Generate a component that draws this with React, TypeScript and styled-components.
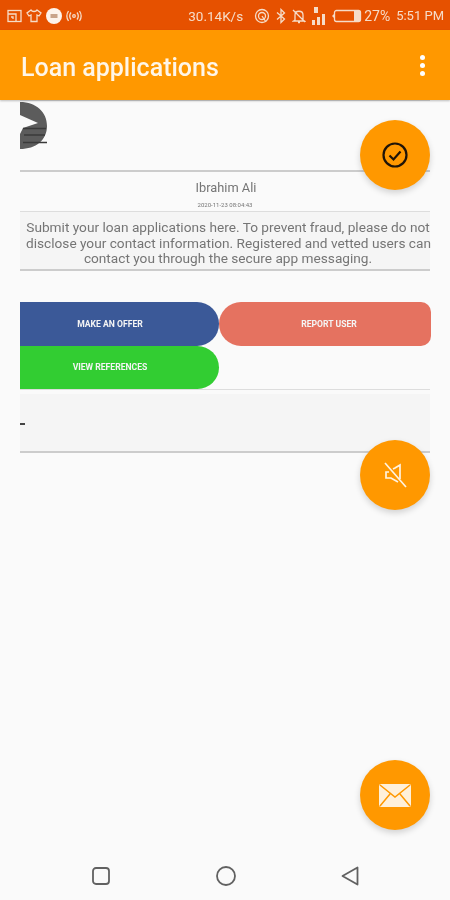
import React from 'react'
import styled, { createGlobalStyle } from 'styled-components'

const GlobalStyle = createGlobalStyle`
  html, body {
    margin: 0;
    padding: 0;
    background: #fafafa;
  }
  * {
    box-sizing: border-box;
  }
`

const palette = {
  ORANGE: '#ff9800',
  DARK_ORANGE: '#e65100',
  GREY_TEXT: '#757575',
  LINE: '#cccccc',
}

const Page = styled.div`
  width: 450px;
  height: 900px;
  display: flex;
  flex-direction: column;
  overflow: hidden;
  background: #fafafa;
  font-family: Roboto, 'Liberation Sans', sans-serif;
  filter: blur(0.45px);
`

const StatusBar = styled.div`
  height: 30px;
  flex: none;
  background: ${palette.DARK_ORANGE};
  display: flex;
  align-items: center;
  padding: 1px 6px 0 7px;
  color: #f6dcc8;
  font-size: 13px;
`

const StatusLeft = styled.div`
  display: flex;
  align-items: center;
  gap: 4px;
`

const StatusRight = styled.div`
  margin-left: auto;
  display: flex;
  align-items: center;
  gap: 5px;
  white-space: nowrap;
`

const Speed = styled.span`
  margin-right: 6px;
  font-size: 13.5px;
`

const Percent = styled.span`
  margin-left: -3px;
  font-size: 14px;
`

const Clock = styled.span`
  margin-left: 1px;
`

const AppBar = styled.div`
  height: 70px;
  flex: none;
  background: ${palette.ORANGE};
  display: flex;
  align-items: center;
  justify-content: space-between;
  padding: 5px 25px 0 21px;
  box-shadow: 0 1px 2px rgba(0, 0, 0, 0.25);
  position: relative;
  z-index: 2;
`

const Title = styled.h1`
  margin: 0;
  font-size: 25px;
  font-weight: 500;
  color: #fff6e8;
`

const Dots = styled.div`
  display: flex;
  flex-direction: column;
  gap: 3px;
  margin-top: -5px;
`

const Dot = styled.span`
  width: 5px;
  height: 5px;
  border-radius: 50%;
  background: #fff;
`

const Main = styled.div`
  flex: 1;
  position: relative;
  padding: 0 20px;
`

const Logo = styled.div`
  height: 72px;
  padding-top: 1px;
  border-top: 1px solid #d8d8d8;
  border-bottom: 2px solid ${palette.LINE};
  svg {
    display: block;
  }
`

const Name = styled.div`
  height: 26px;
  padding: 8px 0 0 2px;
  text-align: center;
  font-size: 12.8px;
  line-height: 16px;
  color: ${palette.GREY_TEXT};
`

const Stamp = styled.div`
  height: 14px;
  text-align: center;
  font-size: 6px;
  line-height: 14px;
  color: ${palette.GREY_TEXT};
  border-bottom: 1px solid #dddddd;
`

const Message = styled.p`
  margin: 0;
  height: 59px;
  padding: 8px 0 0 6px;
  text-align: center;
  font-size: 13.66px;
  line-height: 15.5px;
  white-space: nowrap;
  color: ${palette.GREY_TEXT};
  background: #f5f5f5;
  border-bottom: 2px solid ${palette.LINE};
`

const Buttons = styled.div`
  margin-top: 31px;
  display: grid;
  grid-template-columns: 199px 212px;
  grid-auto-rows: 43.5px;
`

const ActionButton = styled.div<{ color: string; reportStyle?: boolean }>`
  background: ${({ color }) => color};
  color: #f4f4f4;
  font-size: 8.6px;
  font-weight: 700;
  display: flex;
  align-items: center;
  justify-content: center;
  padding: ${({ reportStyle }) => (reportStyle ? '0 0 0 8px' : '0 19px 0 0')};
  border-radius: ${({ reportStyle }) =>
    reportStyle ? '22px 10px 10px 22px' : '0 22px 22px 0'};
`

const Dash = styled.div`
  border-top: 1px solid #dddddd;
`

const Attachment = styled.div`
  margin-top: 4px;
  height: 59px;
  display: flex;
  align-items: center;
  padding-top: 3px;
  background: #f5f5f5;
  border-bottom: 2px solid ${palette.LINE};
`

const Tick = styled.span`
  width: 5px;
  height: 2px;
  background: #444444;
`

const Fab = styled.div<{ top: number }>`
  position: absolute;
  right: 20px;
  top: ${({ top }) => top}px;
  width: 70px;
  height: 70px;
  border-radius: 50%;
  background: ${palette.ORANGE};
  display: flex;
  align-items: center;
  justify-content: center;
  box-shadow: 0 3px 6px rgba(0, 0, 0, 0.16);
  z-index: 1;
`

const NavBar = styled.div`
  height: 50px;
  flex: none;
  display: flex;
  align-items: center;
  padding: 1px 91px 0 92px;
  justify-content: space-between;
  background: #fafafa;
`

const StatusIcon = ({ w, children }: { w: number; children: React.ReactNode }) => (
  <svg
    width={w}
    height={16}
    viewBox={`0 0 ${w} 16`}
    fill='none'
    stroke='#f6dcc8'
    strokeWidth={1.3}
  >
    {children}
  </svg>
)

export default function App() {
  return (
    <Page>
      <GlobalStyle />
      <StatusBar>
        <StatusLeft>
          <StatusIcon w={15}>
            <rect x={1} y={2.5} width={13} height={11} />
            <path d='M1 6h8v7.500M4 9h2v2' />
          </StatusIcon>
          <StatusIcon w={16}>
            <path d='M5 2 1 5l2 3 2-1v6.500h6V7l2 1 2-3-4-3c-1 2-5 2-6 0z' />
          </StatusIcon>
          <svg width={16} height={16} viewBox='0 0 16 16'>
            <circle cx={8} cy={8} r={8} fill='#fdf3ec' />
            <rect x={4.500} y={6} width={7} height={4} fill='#c9a38a' />
          </svg>
          <StatusIcon w={16}>
            <circle cx={8} cy={8} r={1.300} />
            <path d='M5 4.500c-1.500 2-1.500 5 0 7M11 4.500c1.500 2 1.500 5 0 7M2.500 3c-2 3-2 7 0 10M13.500 3c2 3 2 7 0 10' />
          </StatusIcon>
        </StatusLeft>
        <StatusRight>
          <Speed>30.14K/s</Speed>
          <StatusIcon w={16}>
            <circle cx={8} cy={8} r={6.500} />
            <circle cx={8} cy={8} r={3.500} />
            <path d='M8 8l4 6' />
          </StatusIcon>
          <StatusIcon w={12}>
            <path d='M2 4.500 9.500 11 6 14.500v-13L9.500 5 2 11.500' />
          </StatusIcon>
          <StatusIcon w={14}>
            <path d='M3 12V7c0-5 8-5 8 0v5l1.500 1h-11zM6 14.500h2M1 2l12 12' />
          </StatusIcon>
          <svg width={15} height={20} viewBox='0 0 15 20' fill='#f6dcc8'>
            <rect x={3} y={1} width={4} height={6} />
            <rect x={1} y={14} width={3} height={5} />
            <rect x={6} y={11} width={3} height={8} />
            <rect x={11} y={8} width={3} height={11} />
          </svg>
          <svg width={31} height={14} viewBox='0 0 31 14'>
            <path d='M1 7l2-2v4z' fill='#f6dcc8' />
            <rect x={3.500} y={1.500} width={26} height={11} rx={2} fill='none' stroke='#f6dcc8' strokeWidth={1.300} />
            <rect x={23} y={2} width={6} height={10} fill='#f6dcc8' />
          </svg>
          <Percent>27%</Percent>
          <Clock>5:51 PM</Clock>
        </StatusRight>
      </StatusBar>
      <AppBar>
        <Title>Loan applications</Title>
        <Dots>
          <Dot />
          <Dot />
          <Dot />
        </Dots>
      </AppBar>
      <Main>
        <Logo>
          <svg width={28} height={48} viewBox='0 0 28 48'>
            <path
              d='M0 0C16 0 27 10 27 24C27 38 16 47 0 47V32L3 26L18 21L0 13Z'
              fill='#5c5c5c'
            />
            <path d='M3 26.500H26M4 33H25M3 40.500H27' stroke='#3a3a3a' strokeWidth={1.500} />
          </svg>
        </Logo>
        <Name>Ibrahim Ali</Name>
        <Stamp>2020-11-23 08:04:43</Stamp>
        <Message>
          Submit your loan applications here. To prevent fraud, please do not
          <br />
          disclose your contact information. Registered and vetted users can
          <br />
          contact you through the secure app messaging.
        </Message>
        <Buttons>
          <ActionButton color='#3b5998'>MAKE AN OFFER</ActionButton>
          <ActionButton color='#e57260' reportStyle>
            REPORT USER
          </ActionButton>
          <ActionButton color='#32cd32'>VIEW REFERENCES</ActionButton>
        </Buttons>
        <Dash />
        <Attachment>
          <Tick />
        </Attachment>
        <Fab top={20}>
          <svg width={28} height={28} viewBox='0 0 28 28' fill='none' stroke='#1f1408' strokeWidth={2.200}>
            <circle cx={14} cy={14} r={11.500} />
            <path d='M8.500 14.500l4 4 7-8' />
          </svg>
        </Fab>
        <Fab top={340}>
          <svg width={24} height={26} viewBox='0 0 24 26' fill='none' stroke='#fff3e0' strokeWidth={1.700}>
            <path d='M2 1l21 24' />
            <path d='M6 10H3v6h5l7 4M17 4v-1l-5 3-2 1M17 3v14' />
          </svg>
        </Fab>
        <Fab top={660}>
          <svg width={32} height={23} viewBox='0 0 32 23'>
            <rect width={32} height={23} rx={2} fill='#fff0da' />
            <path d='M1 1l15 12L31 1M1 22l10-12M31 22 21 10' fill='none' stroke={palette.ORANGE} strokeWidth={1.500} />
          </svg>
        </Fab>
      </Main>
      <NavBar>
        <svg width={18} height={18} viewBox='0 0 18 18' fill='none' stroke='#616161' strokeWidth={1.800}>
          <rect x={1} y={1} width={16} height={16} rx={3} />
        </svg>
        <svg width={20} height={20} viewBox='0 0 20 20' fill='none' stroke='#616161' strokeWidth={1.800}>
          <circle cx={10} cy={10} r={9} />
        </svg>
        <svg width={18} height={20} viewBox='0 0 18 20' fill='none' stroke='#616161' strokeWidth={1.800} strokeLinejoin='round'>
          <path d='M16.500 1.500v17L1.500 10z' />
        </svg>
      </NavBar>
    </Page>
  )
}
